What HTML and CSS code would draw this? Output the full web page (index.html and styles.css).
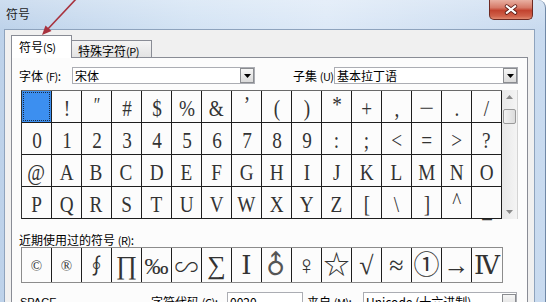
FILE: index.html
```html
<!DOCTYPE html>
<html>
<head>
<meta charset="utf-8">
<link rel="stylesheet" href="styles.css">
</head>
<body>
<div class="window">
  <div class="titlebar">
    <span class="title">符号</span>
    <div class="close">
      <svg width="44" height="20" viewBox="0 0 44 20">
        <path d="M17.5 6 L26.5 13 M26.5 6 L17.5 13" stroke="#5a1a14" stroke-width="4" stroke-linecap="round"/>
        <path d="M17.5 6 L26.5 13 M26.5 6 L17.5 13" stroke="#fff" stroke-width="2.2" stroke-linecap="round"/>
      </svg>
    </div>
  </div>
  <div class="client">
    <div class="tabs">
      <div class="tab active">符号 <span class="acc">(S)</span></div>
      <div class="tab inactive">特殊字符 <span class="acc">(P)</span></div>
    </div>
    <div class="panel">
      <div class="fontrow">
        <span class="lbl lbl-font">字体 <span class="acc">(F)</span>:</span>
        <div class="combo combo-font"><span class="ctext">宋体</span><span class="dd"><svg width="7" height="4" viewBox="0 0 7 4"><path d="M0 0H7L3.5 4Z" fill="#000"/></svg></span></div>
        <span class="lbl lbl-sub">子集 <span class="acc">(U)</span>:</span>
        <div class="combo combo-sub"><span class="ctext">基本拉丁语</span><span class="dd"><svg width="7" height="4" viewBox="0 0 7 4"><path d="M0 0H7L3.5 4Z" fill="#000"/></svg></span></div>
      </div>
      <div class="gridwrap">
        <div class="grid">
          <div class="cell sel"><span class="focus"></span></div>
          <div class="cell"><span>!</span></div>
          <div class="cell"><span class="slant">″</span></div>
          <div class="cell"><span>#</span></div>
          <div class="cell"><span>$</span></div>
          <div class="cell"><span>%</span></div>
          <div class="cell"><span>&amp;</span></div>
          <div class="cell"><span class="hi">’</span></div>
          <div class="cell"><span>(</span></div>
          <div class="cell"><span>)</span></div>
          <div class="cell"><span class="hi">*</span></div>
          <div class="cell"><span>+</span></div>
          <div class="cell"><span>,</span></div>
          <div class="cell"><span class="dash">−</span></div>
          <div class="cell"><span>.</span></div>
          <div class="cell"><span>/</span></div>

          <div class="cell"><span>0</span></div>
          <div class="cell"><span>1</span></div>
          <div class="cell"><span>2</span></div>
          <div class="cell"><span>3</span></div>
          <div class="cell"><span>4</span></div>
          <div class="cell"><span>5</span></div>
          <div class="cell"><span>6</span></div>
          <div class="cell"><span>7</span></div>
          <div class="cell"><span>8</span></div>
          <div class="cell"><span>9</span></div>
          <div class="cell"><span>:</span></div>
          <div class="cell"><span>;</span></div>
          <div class="cell"><span>&lt;</span></div>
          <div class="cell"><span>=</span></div>
          <div class="cell"><span>&gt;</span></div>
          <div class="cell"><span>?</span></div>

          <div class="cell"><span>@</span></div>
          <div class="cell"><span>A</span></div>
          <div class="cell"><span>B</span></div>
          <div class="cell"><span>C</span></div>
          <div class="cell"><span>D</span></div>
          <div class="cell"><span>E</span></div>
          <div class="cell"><span>F</span></div>
          <div class="cell"><span>G</span></div>
          <div class="cell"><span>H</span></div>
          <div class="cell"><span>I</span></div>
          <div class="cell"><span>J</span></div>
          <div class="cell"><span>K</span></div>
          <div class="cell"><span>L</span></div>
          <div class="cell"><span>M</span></div>
          <div class="cell"><span>N</span></div>
          <div class="cell"><span>O</span></div>

          <div class="cell"><span>P</span></div>
          <div class="cell"><span>Q</span></div>
          <div class="cell"><span>R</span></div>
          <div class="cell"><span>S</span></div>
          <div class="cell"><span>T</span></div>
          <div class="cell"><span>U</span></div>
          <div class="cell"><span>V</span></div>
          <div class="cell"><span>W</span></div>
          <div class="cell"><span>X</span></div>
          <div class="cell"><span>Y</span></div>
          <div class="cell"><span>Z</span></div>
          <div class="cell"><span>[</span></div>
          <div class="cell"><span>\</span></div>
          <div class="cell"><span>]</span></div>
          <div class="cell"><span class="hi">^</span></div>
          <div class="cell"><span class="lo">_</span></div>
        </div>
        <div class="scroll">
          <span class="sarrow"><svg width="7" height="4" viewBox="0 0 7 4"><path d="M0 4H7L3.5 0Z" fill="#8a8a8a"/></svg></span>
          <span class="thumb"></span>
          <span class="spacer"></span>
          <span class="sarrow"><svg width="7" height="4" viewBox="0 0 7 4"><path d="M0 0H7L3.5 4Z" fill="#8a8a8a"/></svg></span>
        </div>
      </div>
      <div class="recentlbl">近期使用过的符号 <span class="acc">(R)</span>:</div>
      <div class="recent">
        <div class="rcell"><span class="small">©</span></div>
        <div class="rcell"><span class="small">®</span></div>
        <div class="rcell"><span class="oint">∮</span></div>
        <div class="rcell"><span>∏</span></div>
        <div class="rcell"><span class="permil">‰</span></div>
        <div class="rcell"><span class="wave">∽</span></div>
        <div class="rcell"><span>∑</span></div>
        <div class="rcell"><span>Ⅰ</span></div>
        <div class="rcell"><span class="male">♂</span></div>
        <div class="rcell"><span>♀</span></div>
        <div class="rcell"><span>☆</span></div>
        <div class="rcell"><span>√</span></div>
        <div class="rcell"><span>≈</span></div>
        <div class="rcell"><span>①</span></div>
        <div class="rcell"><span>→</span></div>
        <div class="rcell"><span>Ⅳ</span></div>
      </div>
      <div class="bottom">
        <span class="bname">SPACE</span>
        <span class="lbl lbl-code">字符代码 <span class="acc">(C)</span>:</span>
        <div class="input">0020</div>
        <span class="lbl lbl-from">来自 <span class="acc">(M)</span>:</span>
        <div class="combo combo-from"><span class="ctext">Unicode (十六进制)</span><span class="dd"></span></div>
      </div>
    </div>
  </div>
</div>
<svg class="arrow" width="90" height="40" viewBox="0 0 90 40">
  <path d="M77 -2 L46 31" stroke="#a8323e" stroke-width="1.6" fill="none"/>
  <path d="M42 35 L51.5 31 L45.5 25.5 Z" fill="#a8323e"/>
</svg>
</body>
</html>
```

FILE: styles.css
```css
html, body {
  margin: 0;
  padding: 0;
}
body {
  width: 551px;
  height: 302px;
  overflow: hidden;
  position: relative;
  background: #ffffff;
  font-family: "Noto Sans CJK SC", "DejaVu Sans", sans-serif;
  font-size: 12px;
  color: #000;
}

.window {
  width: 546px;
  height: 330px;
  box-sizing: border-box;
  padding: 0 10px 0 4px;
  background: linear-gradient(to bottom, rgba(255,255,255,0.25), rgba(255,255,255,0) 30px),
              linear-gradient(to right, #bdd2ea 0%, #d3e3f4 35%, #dde9f7 60%, #c8daef 100%);
  border-right: 1px solid #7088a6;
  border-radius: 0 8px 0 0;
}

.titlebar {
  height: 29px;
  display: flex;
  align-items: flex-start;
}
.title {
  margin: 6px 0 0 2px;
  font-size: 12px;
  line-height: 16px;
  color: #1e1e1e;
}
.close {
  margin-left: auto;
  margin-right: 2px;
  width: 44px;
  height: 20px;
  box-sizing: border-box;
  border: 1px solid #6e2a22;
  border-top: none;
  border-radius: 0 0 5px 5px;
  background: linear-gradient(to bottom, #e9b0a2 0%, #d67a68 40%, #c2432f 55%, #d0614a 85%, #e08a70 100%);
  display: flex;
  align-items: center;
  justify-content: center;
}
.close svg { display: block; }

.client {
  background: #f0f0f0;
  border: 1px solid #8ea3bd;
  border-bottom: none;
  height: 300px;
  box-sizing: border-box;
  padding: 5px 6px 0 6px;
}

.tabs {
  display: flex;
  align-items: flex-end;
  height: 23px;
  margin-bottom: -1px;
  position: relative;
  z-index: 1;
}
.tab {
  box-sizing: border-box;
  border: 1px solid #898c95;
  white-space: nowrap;
  display: flex;
  align-items: center;
  line-height: 14px;
}
.tab.active {
  width: 61px;
  height: 23px;
  border-bottom: none;
  background: #ffffff;
  padding-left: 7px;
}
.tab.inactive {
  width: 80px;
  height: 18px;
  border-left: none;
  background: linear-gradient(to bottom, #f4f4f4, #e3e3e3);
  padding-left: 6px;
  padding-top: 3px;
}
.acc {
  font-size: 11px;
  letter-spacing: -0.5px;
}

.panel {
  background: #fcfcfc;
  border: 1px solid #898c95;
  height: 280px;
  box-sizing: border-box;
  padding: 9px 0 0 7px;
}

.fontrow {
  display: flex;
  align-items: center;
  height: 17px;
}
.lbl {
  white-space: nowrap;
  line-height: 14px;
}
.lbl-font { width: 53px; }
.lbl-sub { width: 41px; margin-left: 38px; }

.combo {
  box-sizing: border-box;
  height: 17px;
  border: 1px solid #abadb3;
  background: #fff;
  display: flex;
  align-items: center;
  padding-left: 2px;
  line-height: 14px;
}
.combo-font { width: 183px; }
.combo-sub { width: 184px; }
.ctext { flex: 1; white-space: nowrap; }
.dd {
  width: 14px;
  height: 15px;
  box-sizing: border-box;
  border: 1px solid #8a8c90;
  background: linear-gradient(to bottom, #f6f6f6, #dadada);
  display: flex;
  align-items: center;
  justify-content: center;
}
.dd svg { display: block; }

.gridwrap {
  display: flex;
  margin: 6px 0 0 2px;
}
.grid {
  display: grid;
  grid-template-columns: repeat(16, 30px);
  grid-auto-rows: 32px;
  border-left: 1px solid #303030;
  border-top: 1px solid #6a6a6a;
}
.cell, .rcell {
  box-sizing: border-box;
  border-right: 1px solid #1e1e1e;
  border-bottom: 1px solid #1e1e1e;
  display: flex;
  align-items: center;
  justify-content: center;
  font-family: "Liberation Serif", "DejaVu Serif", "Noto Sans CJK SC", serif;
  font-size: 24px;
  color: #333;
  line-height: 1;
  position: relative;
}
.cell span {
  display: inline-block;
  transform: scaleX(0.8);
  padding-top: 2px;
}
.cell .hi { padding-top: 0; margin-top: -6px; }
.cell .lo { padding-top: 12px; }
.cell .slant { font-size: 20px; margin-top: -6px; font-style: italic; }
.cell .dash { transform: scaleX(1.1); }
.cell.sel {
  background: #3c8ff0;
}
.cell .focus {
  position: absolute;
  left: 1px;
  top: 1px;
  right: 1px;
  bottom: 1px;
  border: 1px dotted #1a2a40;
  padding: 0;
  transform: none;
}

.scroll {
  width: 16px;
  height: 129px;
  box-sizing: border-box;
  background: linear-gradient(to right, #e8e8e8, #f4f4f4);
  border-right: 1px solid #d4d4d4;
  display: flex;
  flex-direction: column;
  align-items: center;
  padding: 5px 0 4px;
}
.sarrow { display: block; height: 5px; }
.sarrow svg { display: block; }
.thumb {
  display: block;
  margin-top: 9px;
  width: 13px;
  height: 15px;
  box-sizing: border-box;
  border: 1px solid #9a9a9a;
  border-radius: 2px;
  background: linear-gradient(to right, #f2f2f2, #dcdcdc);
}
.spacer { flex: 1; }

.recentlbl {
  margin-top: 14px;
  line-height: 14px;
  white-space: nowrap;
}

.recent {
  display: grid;
  grid-template-columns: repeat(16, 30px);
  width: 482px;
  height: 36px;
  box-sizing: border-box;
  margin-left: 2px;
  border: 1px solid #8c8c8c;
}
.rcell {
  border-bottom: none;
  font-size: 26px;
}
.rcell span { display: inline-block; padding-top: 2px; }
.rcell:last-child { border-right: none; }
.rcell .small { font-size: 15px; }
.rcell .oint { font-size: 21px; }
.rcell .permil { font-size: 24px; }
.rcell .wave {
  font-family: "Noto Sans CJK SC", "DejaVu Sans", sans-serif;
  font-size: 24px;
  font-weight: 300;
}
.rcell .male {
  font-family: "DejaVu Sans", sans-serif;
  font-size: 21px;
  color: #555;
  transform: rotate(-45deg) scale(1.25);
  padding-top: 0;
}

.bottom {
  display: flex;
  align-items: flex-start;
  margin-top: 9px;
  height: 20px;
}
.bname {
  width: 131px;
  margin-left: 1px;
  padding-top: 3px;
  line-height: 14px;
  font-family: "Liberation Sans", sans-serif;
  font-size: 11px;
}
.lbl-code { width: 76px; padding-top: 3px; }
.input {
  width: 76px;
  height: 20px;
  box-sizing: border-box;
  border: 1px solid #abadb3;
  background: #fff;
  padding: 2px 0 0 2px;
  line-height: 14px;
}
.lbl-from { width: 56px; margin-left: 4px; padding-top: 3px; }
.combo-from {
  width: 154px;
  height: 20px;
  align-items: flex-start;
  padding-top: 2px;
}
.combo-from .dd { height: 16px; margin-top: -1px; }

.arrow {
  position: absolute;
  left: 0;
  top: 0;
  overflow: visible;
}
```
